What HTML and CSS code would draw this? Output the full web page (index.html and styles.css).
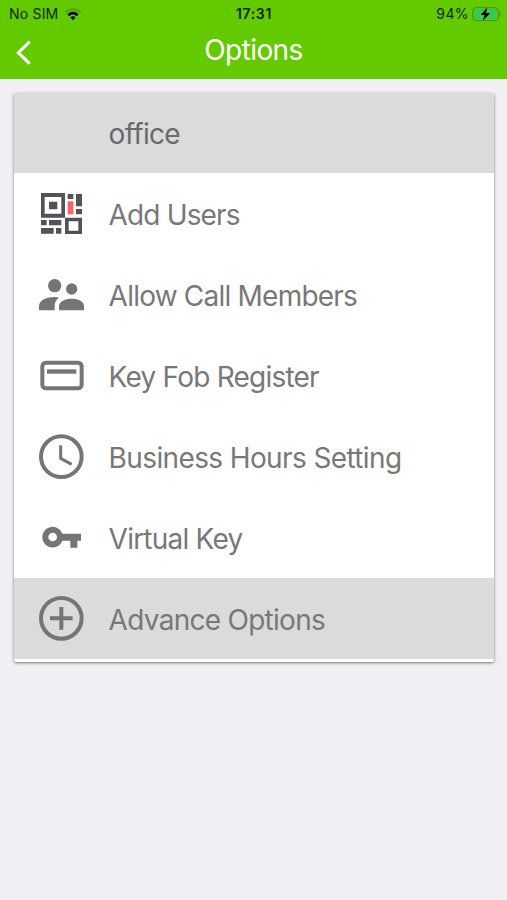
FILE: index.html
```html
<!DOCTYPE html>
<html lang="en">
<head>
<meta charset="utf-8">
<meta name="viewport" content="width=device-width, initial-scale=1">
<title>Options</title>
<link rel="stylesheet" href="styles.css">
</head>
<body>
<header class="top">
  <div class="status">
    <div class="carrier"><span class="sim">No SIM</span>
      <svg class="wifi" viewBox="0 0 54 45"><path d="M2 14C16-1 38-1 52 14L47 19C36 8 18 8 7 19Z" fill="#4b9900" opacity=".7"/><path d="M10 22C20 12 34 12 44 22L38 28C31 21 23 21 16 28Z"/><path d="M19 31Q27 24 35 31L27 40Z"/></svg>
    </div>
    <time class="time">17:31</time>
    <div class="power"><span class="percent">94%</span>
      <svg class="battery" viewBox="0 0 90 45"><rect x="2" y="2" width="77" height="39" rx="10" fill="none" stroke="#419514" stroke-width="3"/><rect x="6" y="6" width="68" height="31" rx="6" fill="#35c95b"/><path d="M83 16Q91 21 83 28Z" fill="#419514"/><path d="M46 1L26 24H38L32 42L55 18H42Z" stroke="#35c95b" stroke-width="3" paint-order="stroke"/></svg>
    </div>
  </div>
  <nav class="nav">
    <svg class="back" viewBox="0 0 48 75"><path d="M41 5L7 38L41 71" fill="none" stroke="#fff" stroke-width="9"/></svg>
    <h1 class="title">Options</h1>
  </nav>
</header>
<main class="card">
  <div class="row head"><span class="label office">office</span></div>
  <div class="row">
    <svg class="icon" viewBox="0 -3 180 180"><g fill="#505357"><path fill-rule="evenodd" d="M33 24H105V98H33ZM44 36V86H94V36Z"/><path d="M57 50H82V73H57ZM113 27H130V42H113ZM138 27H156V64H138ZM138 72H156V88H138ZM33 105H50V121H33ZM57 105H94V121H57ZM33 129H71V146H33ZM78 129H94V146H78Z"/><path fill-rule="evenodd" d="M105 98H156V147H105ZM116 109V137H145V109Z"/></g><path d="M113 49H130V88H113Z" fill="#ff6262"/></svg>
    <span class="label users">Add Users</span>
  </div>
  <div class="row">
    <svg class="icon" viewBox="0 0 180 180"><circle cx="74" cy="62" r="20"/><circle cx="125" cy="72" r="17"/><path d="M27 136V124C27 105 51 96 74 96Q82 96 87 98C78 105 74 112 74 123V136Z"/><path d="M87 136V123C87 109 106 101 125 101S162 109 162 123V136Z"/></svg>
    <span class="label members">Allow Call Members</span>
  </div>
  <div class="row">
    <svg class="icon" viewBox="0 0 180 180"><rect x="37" y="50" width="118" height="77" rx="11" fill="none" stroke="#757575" stroke-width="12"/><path d="M51 70H139V83H51Z"/></svg>
    <span class="label fob">Key Fob Register</span>
  </div>
  <div class="row">
    <svg class="icon" viewBox="0 0 180 180"><g fill="none" stroke="#757575"><circle cx="94" cy="89" r="61" stroke-width="12"/><path d="M92 55V94L125 112" stroke-width="9"/></g></svg>
    <span class="label hours">Business Hours Setting</span>
  </div>
  <div class="row">
    <svg class="icon" viewBox="0 0 180 180"><path fill-rule="evenodd" d="M97 77H153V98H142V119H121V98H97A31 31 0 1 1 97 77ZM68 74A13 13 0 1 0 68 100A13 13 0 1 0 68 74Z"/></svg>
    <span class="label key">Virtual Key</span>
  </div>
  <div class="row advanced">
    <svg class="icon" viewBox="0 0 180 180"><g fill="none" stroke="#757575" stroke-width="12"><circle cx="94" cy="88" r="61"/><path d="M94 54V122M60 88H128"/></g></svg>
    <span class="label advance">Advance Options</span>
  </div>
</main>
</body>
</html>
```
FILE: styles.css
```css
* { box-sizing: border-box; }
body { margin: 0; min-height: 900px; background: #efeff4; font-family: Inter, "Liberation Sans", sans-serif; }
svg { display: block; flex: none; }
.top { height: 79px; background: #64ca00; }
.status { display: grid; grid-template-columns: 1fr auto 1fr; height: 27px; padding: 0 5px 0 9px; line-height: 28px; font-size: 14px; color: #112500; }
.carrier, .power { display: flex; align-items: center; }
.carrier { gap: 6px; }
.sim { letter-spacing: .2px; }
.wifi { width: 18px; height: 15px; }
.time { font-weight: 600; letter-spacing: .6px; margin-right: 3px; }
.power { justify-content: flex-end; gap: 3px; }
.percent { letter-spacing: .4px; }
.battery { width: 30px; height: 15px; }
.nav { display: grid; grid-template-columns: 60px 1fr 60px; height: 46px; align-items: center; }
.back { width: 16px; height: 25px; margin: 4px 0 0 16px; }
.title { margin: 0; text-align: center; font-size: 28px; font-weight: 400; line-height: 46px; letter-spacing: -.6px; color: #fff; }
.card { margin: 14px 13px 0 14px; height: 569px; background: #fff; border-radius: 2px; box-shadow: 0 1px 3px rgba(0,0,0,.5); overflow: hidden; }
.row { display: flex; height: 81px; padding-left: 16px; }
.head { height: 80px; padding-left: 94px; background: #dbdbdb; }
.advanced { background: #dbdbdb; }
.icon { width: 60px; height: 60px; margin: 11px 18px 0 0; fill: #757575; }
.label { padding: .5px 0 0 .6px; font-size: 28px; line-height: 83px; letter-spacing: -.78px; white-space: nowrap; color: #787878; }
.office { padding-top: 0; color: #6a6a6a; letter-spacing: -.7px; }
.users { letter-spacing: -.85px; }
.hours { letter-spacing: -.62px; }
.advance { letter-spacing: -.72px; }
```
